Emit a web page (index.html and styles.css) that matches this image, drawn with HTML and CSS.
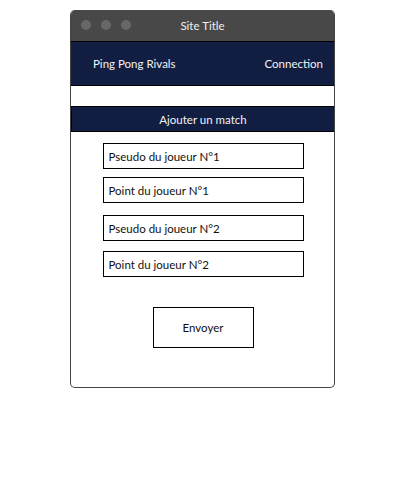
FILE: index.html
```html
<!DOCTYPE html>
<html lang="fr">
<head>
<meta charset="utf-8">
<title>Site Title</title>
<link rel="stylesheet" href="styles.css">
</head>
<body>
<div class="window">
  <div class="titlebar">
    <div class="dots"><span class="dot"></span><span class="dot"></span><span class="dot"></span></div>
    <div class="title">Site Title</div>
  </div>
  <nav class="nav">
    <span class="brand">Ping Pong Rivals</span>
    <span class="link">Connection</span>
  </nav>
  <div class="section-head">Ajouter un match</div>
  <form class="form">
    <div class="field f1">Pseudo du joueur N°1</div>
    <div class="field f2">Point du joueur N°1</div>
    <div class="field f3">Pseudo du joueur N°2</div>
    <div class="field f4">Point du joueur N°2</div>
    <div class="submit">Envoyer</div>
  </form>
</div>
</body>
</html>
```
FILE: styles.css
```css
html, body {
  margin: 0;
  padding: 0;
  background: #fff;
}
body {
  font-family: "Lato", "Liberation Sans", sans-serif;
  font-size: 11.5px;
  color: #111;
}
.window {
  margin: 10px 0 0 70px;
  width: 263px;
  height: 377px;
  border: 1px solid #444;
  border-top: none;
  border-radius: 5px;
  overflow: hidden;
  box-sizing: content-box;
}
.titlebar {
  position: relative;
  height: 31px;
  background: #484848;
  display: flex;
  align-items: center;
  justify-content: center;
  margin: 0 -1px;
}
.dots {
  position: absolute;
  left: 11px;
  top: 10px;
  display: flex;
  gap: 10px;
}
.dot {
  width: 10px;
  height: 10px;
  border-radius: 50%;
  background: #676767;
}
.title {
  color: #f0f0f0;
}
.nav {
  height: 43px;
  background: #111e41;
  border: 1px solid #000;
  border-right: none;
  border-left: none;
  display: flex;
  align-items: center;
  justify-content: space-between;
  padding: 0 11px 0 22px;
  color: #f2f2f2;
}
.section-head {
  margin-top: 20px;
  height: 24px;
  background: #111e41;
  border: 1px solid #000;
  border-right: none;
  display: flex;
  align-items: center;
  justify-content: center;
  color: #f2f2f2;
}
.form {
  display: flex;
  flex-direction: column;
  align-items: center;
  padding-top: 11px;
  padding-left: 1px;
}
.field {
  width: 194px;
  height: 24px;
  border: 1px solid #000;
  display: flex;
  align-items: center;
  padding-left: 5px;
  box-sizing: content-box;
}
.f2 { margin-top: 8px; }
.f3 { margin-top: 12px; }
.f4 { margin-top: 10px; }
.submit {
  margin-top: 30px;
  width: 99px;
  height: 39px;
  border: 1px solid #000;
  display: flex;
  align-items: center;
  justify-content: center;
}
```
